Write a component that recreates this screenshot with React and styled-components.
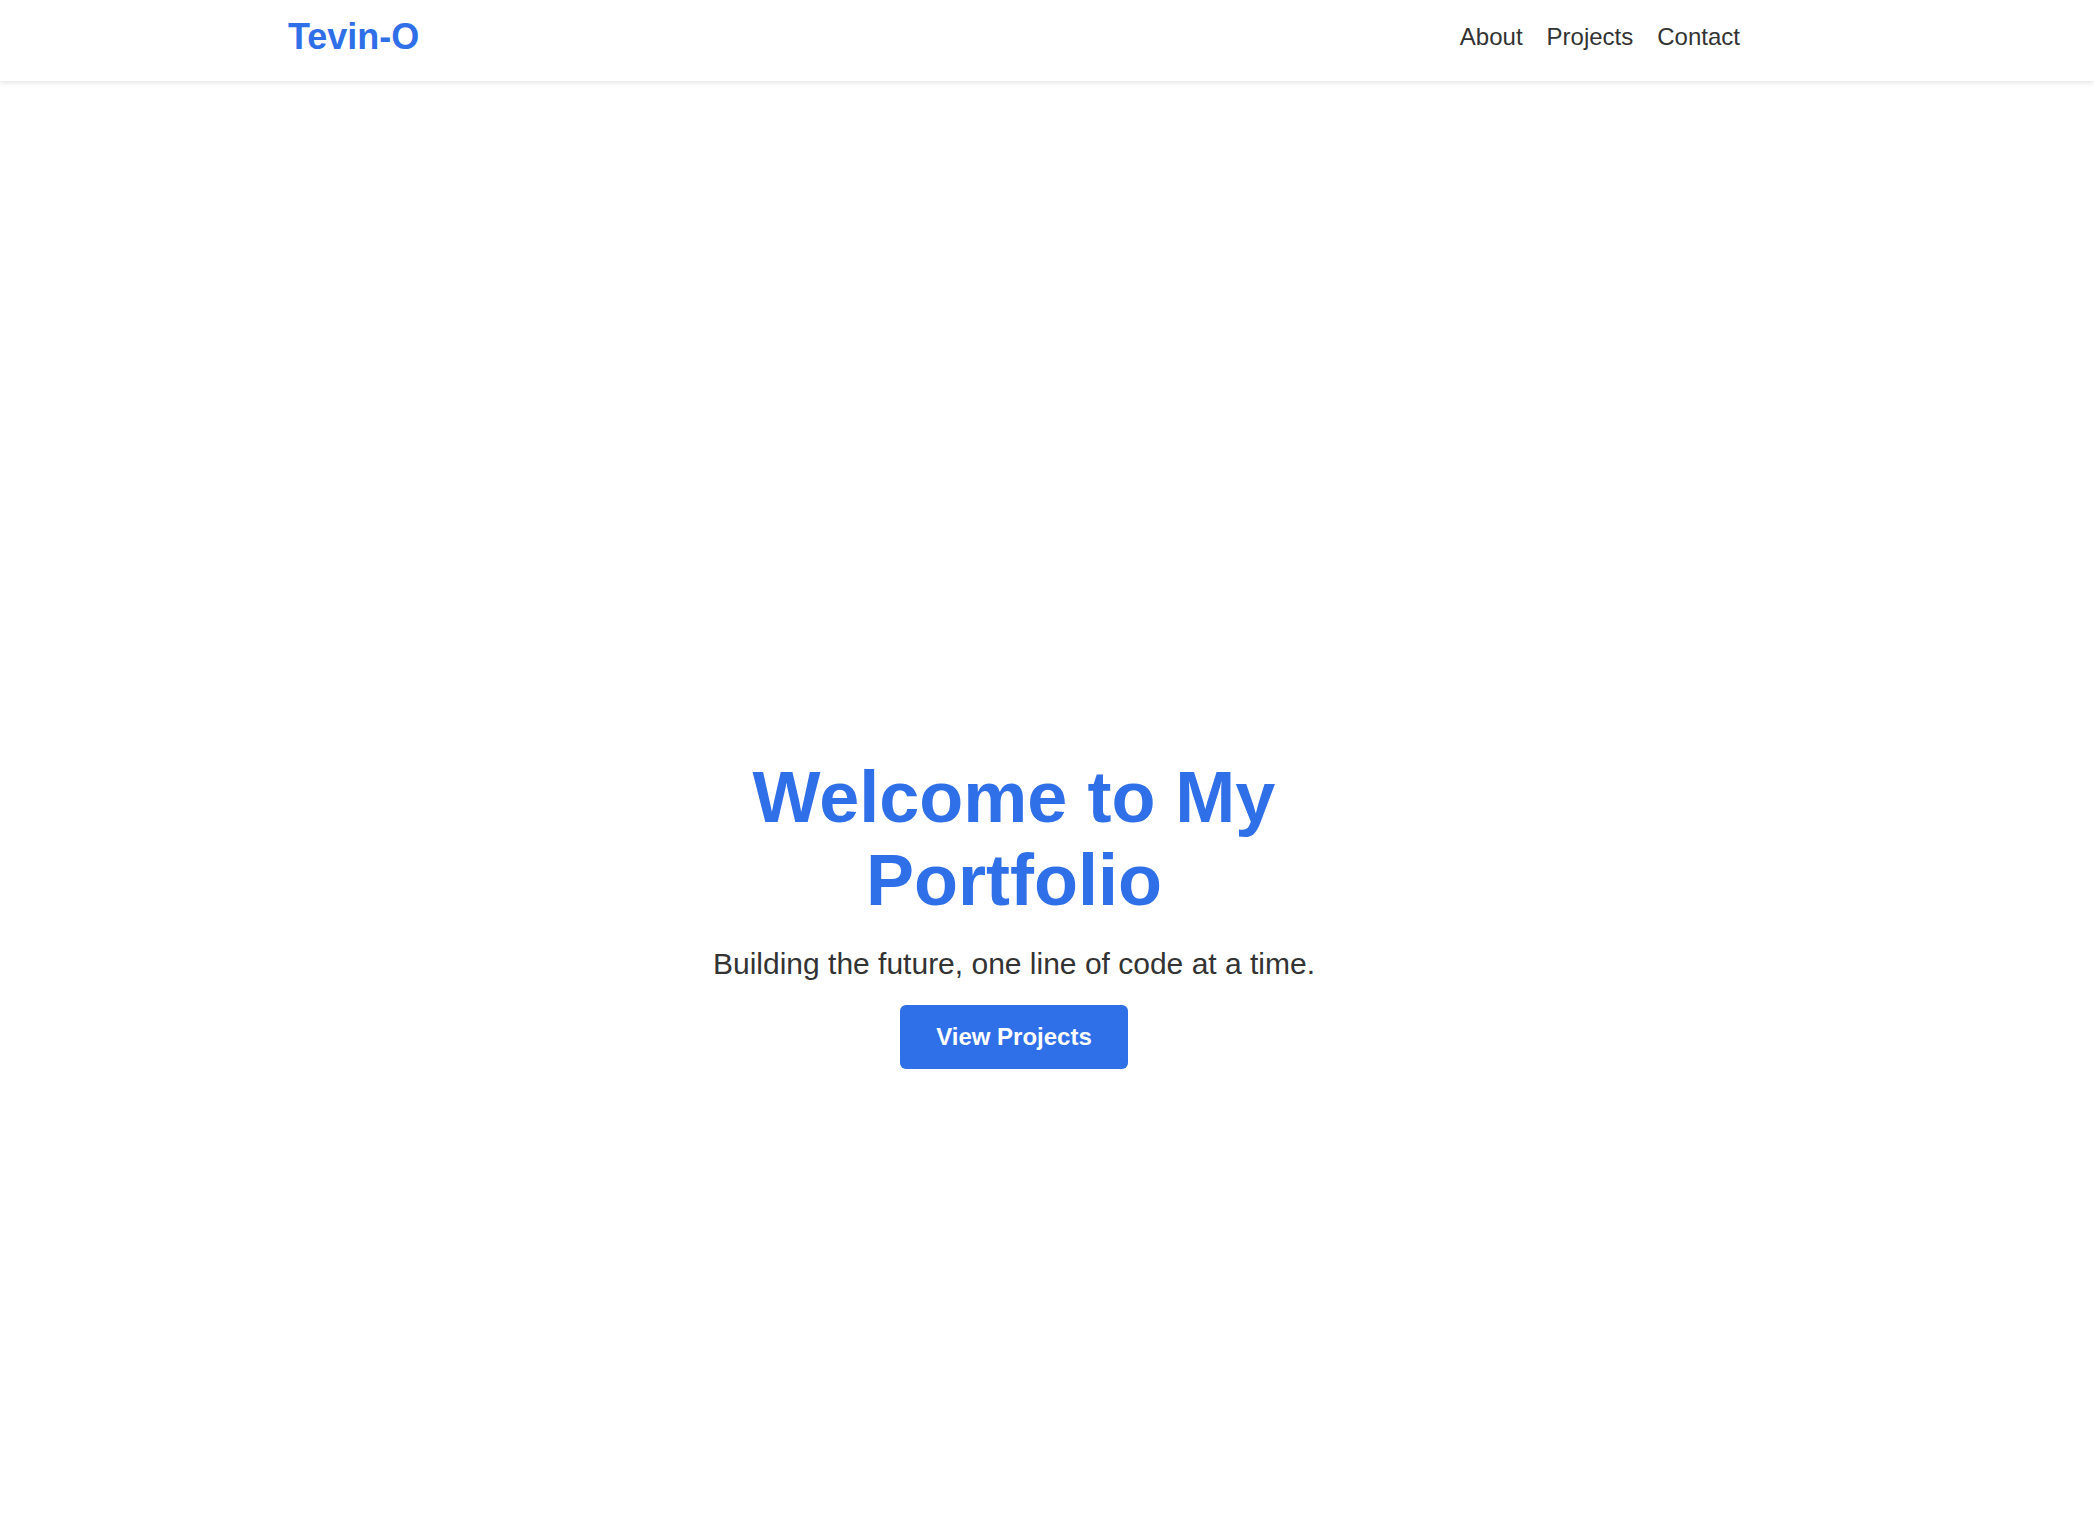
import React from "react";
import styled, { createGlobalStyle } from "styled-components";

const GlobalStyle = createGlobalStyle`
  html, body {
    margin: 0;
    padding: 0;
    background: #ffffff;
  }
  body {
    font-family: "Liberation Sans", Arial, Helvetica, sans-serif;
    color: #333333;
  }
  * { box-sizing: border-box; }
`;

const Page = styled.div`
  min-height: 100vh;
  display: flex;
  flex-direction: column;
`;

const Header = styled.header`
  background: #ffffff;
  box-shadow: 0 2px 5px rgba(0, 0, 0, 0.1);
  position: relative;
  z-index: 1;
`;

const Container = styled.div`
  width: 1452px;
  margin-left: 288px;
`;

const HeaderInner = styled(Container)`
  height: 81px;
  padding-top: 16px;
  display: flex;
  justify-content: space-between;
  align-items: flex-start;
`;

const Logo = styled.a`
  font-size: 36px;
  line-height: 42px;
  font-weight: 700;
  color: #2f6fe8;
  text-decoration: none;
`;

const NavList = styled.nav`
  display: flex;
  gap: 24px;
  height: 42px;
  align-items: center;
`;

const NavLink = styled.a`
  font-size: 24px;
  color: #333333;
  text-decoration: none;
`;

const Main = styled.main`
  flex: 1;
  display: flex;
  padding-top: 229px;
`;

const HeroInner = styled(Container)`
  display: flex;
  flex-direction: column;
  align-items: center;
  justify-content: center;
`;

const HeroContent = styled.section`
  max-width: 750px;
  text-align: center;
  display: flex;
  flex-direction: column;
  align-items: center;
`;

const Title = styled.h1`
  margin: 0;
  font-size: 72px;
  line-height: 83px;
  font-weight: 700;
  color: #2f6fe8;
`;

const Subtitle = styled.p`
  margin: 25px 0 0;
  font-size: 30px;
  color: #333333;
`;

const Button = styled.a`
  margin-top: 24px;
  display: inline-block;
  background: #2f6fe8;
  color: #ffffff;
  font-size: 24px;
  font-weight: 700;
  line-height: 28px;
  padding: 18px 36px;
  border-radius: 6px;
  text-decoration: none;
`;

export default function App() {
  return (
    <Page>
      <GlobalStyle />
      <Header>
        <HeaderInner>
          <Logo href="#">Tevin-O</Logo>
          <NavList>
            <NavLink href="#about">About</NavLink>
            <NavLink href="#projects">Projects</NavLink>
            <NavLink href="#contact">Contact</NavLink>
          </NavList>
        </HeaderInner>
      </Header>
      <Main>
        <HeroInner>
          <HeroContent>
            <Title>Welcome to My Portfolio</Title>
            <Subtitle>Building the future, one line of code at a time.</Subtitle>
            <Button href="#projects">View Projects</Button>
          </HeroContent>
        </HeroInner>
      </Main>
    </Page>
  );
}
